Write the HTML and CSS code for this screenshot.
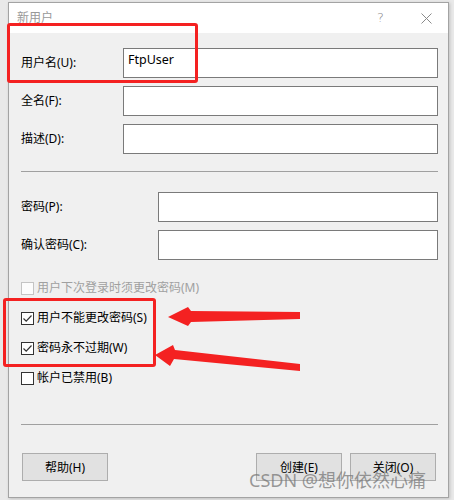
FILE: index.html
```html
<!DOCTYPE html>
<html lang="zh-CN">
<head>
<meta charset="utf-8">
<title>新用户</title>
<link rel="stylesheet" href="styles.css">
</head>
<body>
<div class="window">
  <div class="titlebar">
    <span class="title">新用户</span>
    <span class="tb-help">?</span>
    <svg class="tb-close" width="11" height="11" viewBox="0 0 11 11"><path d="M0.5 0.5L10.5 10.5M10.5 0.5L0.5 10.5" stroke="#8a8a8a" stroke-width="1" fill="none"/></svg>
  </div>
  <div class="content">
    <div class="group">
      <div class="row"><span class="label">用户名(U):</span><div class="input">FtpUser</div></div>
      <div class="row"><span class="label">全名(F):</span><div class="input"></div></div>
      <div class="row"><span class="label">描述(D):</span><div class="input"></div></div>
    </div>
    <div class="sep sep1"></div>
    <div class="group">
      <div class="row"><span class="label wide">密码(P):</span><div class="input"></div></div>
      <div class="row"><span class="label wide">确认密码(C):</span><div class="input"></div></div>
    </div>
    <div class="checks">
      <div class="check disabled"><span class="box"></span><span>用户下次登录时须更改密码(M)</span></div>
      <div class="check"><span class="box"><svg width="11" height="11" viewBox="0 0 11 11"><path d="M1.5 5.5L4.2 8.2L9.5 2.5" stroke="#333" stroke-width="1.2" fill="none"/></svg></span><span>用户不能更改密码(S)</span></div>
      <div class="check"><span class="box"><svg width="11" height="11" viewBox="0 0 11 11"><path d="M1.5 5.5L4.2 8.2L9.5 2.5" stroke="#333" stroke-width="1.2" fill="none"/></svg></span><span>密码永不过期(W)</span></div>
      <div class="check"><span class="box"></span><span>帐户已禁用(B)</span></div>
    </div>
    <div class="sep sep2"></div>
    <div class="buttons">
      <button class="btn help">帮助(H)</button>
      <span class="spacer"></span>
      <button class="btn">创建(E)</button>
      <button class="btn">关闭(O)</button>
    </div>
  </div>
</div>
<div class="mark mark1"></div>
<div class="mark mark2"></div>
<svg class="arrows" width="454" height="500" viewBox="0 0 454 500">
  <polygon points="168,317 188,307 191,311 300,312 300,319 191,322 188,326" fill="#f42121"/>
  <polygon points="155,355 173,345 175,350 300,364 300,371 174,359 170,366" fill="#f42121"/>
</svg>
<div class="watermark">CSDN @想你依然心痛</div>
</body>
</html>
```

FILE: styles.css
```css
html, body {
  margin: 0;
  padding: 0;
}
body {
  width: 454px;
  height: 500px;
  background: #e9e9e9;
  font-family: "Noto Sans", "Noto Sans CJK SC", sans-serif;
  font-size: 12px;
  line-height: 16px;
  color: #000;
  position: relative;
  overflow: hidden;
}
.window {
  margin: 2px 0 0 8px;
  width: 441px;
  height: 496px;
  box-sizing: border-box;
  border: 1px solid #a3a3a3;
  background: #f0f0f0;
  display: flex;
  flex-direction: column;
  box-shadow: 1px 1px 3px rgba(0,0,0,0.18);
}
.titlebar {
  height: 30px;
  flex: none;
  background: #fff;
  display: flex;
  align-items: center;
  padding: 0 16px 0 8px;
}
.title {
  color: #999;
  font-size: 12px;
}
.tb-help {
  margin-left: auto;
  color: #8a8a8a;
  font-size: 13px;
  font-family: "DejaVu Sans", sans-serif;
  font-weight: 300;
  margin-right: 37px;
}
.tb-close {
  display: block;
}
.content {
  flex: 1;
  display: flex;
  flex-direction: column;
  padding: 15px 10px 16px 12px;
}
.group {
  display: flex;
  flex-direction: column;
  gap: 8px;
}
.row {
  display: flex;
  align-items: center;
  height: 30px;
}
.label {
  width: 102px;
  flex: none;
}
.label.wide {
  width: 137px;
}
.input {
  flex: 1;
  height: 30px;
  box-sizing: border-box;
  border: 1px solid #7a7a7a;
  background: #fff;
  padding: 3px 4px;
  font-size: 12.5px;
  line-height: 16px;
}
.sep {
  height: 1px;
  background: #a0a0a0;
  flex: none;
}
.sep1 {
  margin: 17px 0 20px;
}
.checks {
  display: flex;
  flex-direction: column;
  gap: 14px;
  margin-top: 20px;
}
.check {
  display: flex;
  align-items: center;
  height: 16px;
}
.box {
  width: 13px;
  height: 13px;
  box-sizing: border-box;
  border: 1px solid #333;
  background: #fff;
  margin-right: 3px;
  display: flex;
  align-items: center;
  justify-content: center;
}
.box svg {
  display: block;
}
.check.disabled {
  color: #a0a0a0;
}
.check.disabled .box {
  border-color: #c4c4c4;
  background: #fcfcfc;
}
.sep2 {
  margin-top: auto;
}
.buttons {
  display: flex;
  margin-top: 28px;
  gap: 8px;
  padding: 0 2px 0 1px;
}
.spacer {
  flex: 1;
}
.btn {
  width: 86px;
  height: 28px;
  box-sizing: border-box;
  border: 1px solid #adadad;
  background: #e1e1e1;
  font-family: inherit;
  font-size: 12px;
  color: #000;
  padding: 0;
}
.mark {
  position: absolute;
  border: 3px solid #f42121;
  border-radius: 3px;
  box-sizing: border-box;
}
.mark1 {
  left: 7px;
  top: 23px;
  width: 191px;
  height: 60px;
}
.mark2 {
  left: 3px;
  top: 298px;
  width: 153px;
  height: 69px;
}
.arrows {
  position: absolute;
  left: 0;
  top: 0;
}
.watermark {
  position: absolute;
  left: 249px;
  top: 469px;
  font-size: 18px;
  line-height: 22px;
  color: rgba(120,120,120,0.75);
  font-family: "Noto Sans", "Noto Sans CJK SC", sans-serif;
  white-space: nowrap;
}
```
